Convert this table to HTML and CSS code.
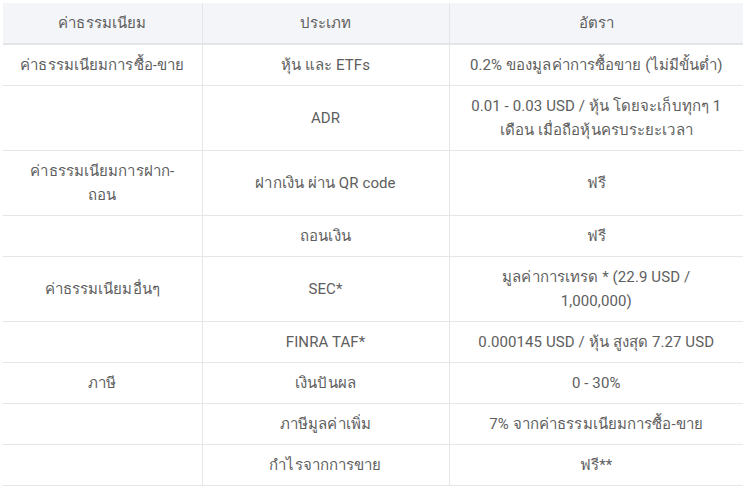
FILE: index.html
```html
<!DOCTYPE html>
<html lang="th">
<head>
<meta charset="utf-8">
<link rel="stylesheet" href="styles.css">
</head>
<body>
<table class="fees">
  <colgroup>
    <col class="c1"><col class="c2"><col class="c3">
  </colgroup>
  <thead>
    <tr><th>ค่าธรรมเนียม</th><th>ประเภท</th><th>อัตรา</th></tr>
  </thead>
  <tbody>
    <tr class="one"><td>ค่าธรรมเนียมการซื้อ-ขาย</td><td>หุ้น และ ETFs</td><td>0.2% ของมูลค่าการซื้อขาย (ไม่มีขั้นต่ำ)</td></tr>
    <tr class="two"><td></td><td>ADR</td><td>0.01 - 0.03 USD / หุ้น โดยจะเก็บทุกๆ 1<br>เดือน เมื่อถือหุ้นครบระยะเวลา</td></tr>
    <tr class="two"><td>ค่าธรรมเนียมการฝาก-<br>ถอน</td><td>ฝากเงิน ผ่าน QR code</td><td>ฟรี</td></tr>
    <tr class="one"><td></td><td>ถอนเงิน</td><td>ฟรี</td></tr>
    <tr class="two"><td>ค่าธรรมเนียมอื่นๆ</td><td>SEC*</td><td>มูลค่าการเทรด * (22.9 USD /<br>1,000,000)</td></tr>
    <tr class="one"><td></td><td>FINRA TAF*</td><td>0.000145 USD / หุ้น สูงสุด 7.27 USD</td></tr>
    <tr class="one"><td>ภาษี</td><td>เงินปันผล</td><td>0 - 30%</td></tr>
    <tr class="one"><td></td><td>ภาษีมูลค่าเพิ่ม</td><td>7% จากค่าธรรมเนียมการซื้อ-ขาย</td></tr>
    <tr class="one"><td></td><td>กำไรจากการขาย</td><td>ฟรี**</td></tr>
  </tbody>
</table>
</body>
</html>
```
FILE: styles.css
```css
html, body {
  margin: 0;
  padding: 0;
  background: #ffffff;
}
body {
  padding: 3px;
  font-family: Roboto, "Noto Sans", "DejaVu Sans", sans-serif;
  font-size: 15px;
  color: #5e5e5e;
}
.fees {
  width: 740px;
  border-collapse: collapse;
  table-layout: fixed;
}
.c1 { width: 199px; }
.c2 { width: 247px; }
.c3 { width: 294px; }
.fees th,
.fees td {
  text-align: center;
  vertical-align: middle;
  padding: 0 8px;
  line-height: 24px;
  letter-spacing: 0.1px;
  border-left: 1px solid #e6e6e6;
  border-bottom: 1px solid #e6e6e6;
}
.fees th:first-child,
.fees td:first-child {
  border-left: none;
}
.fees th {
  font-weight: 400;
  height: 40px;
  background: #f3f5f8;
  border-bottom: 2px solid #e2e4e7;
}
.fees tr.one td { height: 40px; }
.fees tr.two td { height: 64px; }
```
